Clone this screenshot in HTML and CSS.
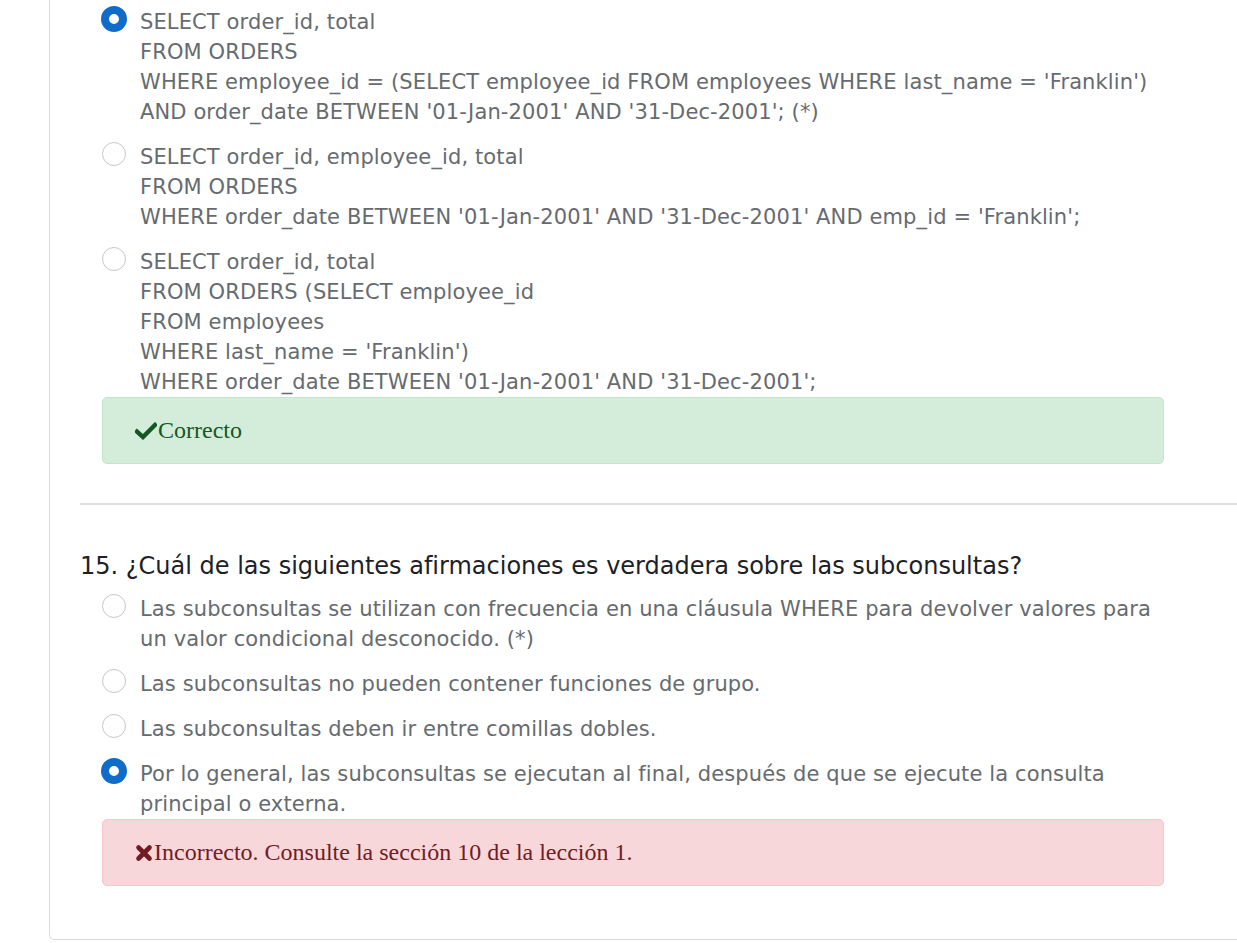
FILE: index.html
```html
<!DOCTYPE html>
<html lang="es">
<head>
<meta charset="utf-8">
<title>Quiz</title>
<link rel="stylesheet" href="styles.css">
</head>
<body>
<div class="panel">
  <div class="question first">
    <div class="options">
      <div class="option">
        <span class="radio checked"></span>
        <div class="text">SELECT order_id, total<br>FROM ORDERS<br>WHERE employee_id = (SELECT employee_id FROM employees WHERE last_name = 'Franklin')<br>AND order_date BETWEEN '01-Jan-2001' AND '31-Dec-2001'; (*)</div>
      </div>
      <div class="option">
        <span class="radio"></span>
        <div class="text">SELECT order_id, employee_id, total<br>FROM ORDERS<br>WHERE order_date BETWEEN '01-Jan-2001' AND '31-Dec-2001' AND emp_id = 'Franklin';</div>
      </div>
      <div class="option">
        <span class="radio"></span>
        <div class="text">SELECT order_id, total<br>FROM ORDERS (SELECT employee_id<br>FROM employees<br>WHERE last_name = 'Franklin')<br>WHERE order_date BETWEEN '01-Jan-2001' AND '31-Dec-2001';</div>
      </div>
      <div class="feedback ok">
        <svg class="ico" width="22" height="18" viewBox="0 0 22 18"><path d="M2 9.5 L8 15 L20 3" fill="none" stroke="#155724" stroke-width="4.4" stroke-linecap="square" stroke-linejoin="miter"/></svg>Correcto
      </div>
    </div>
  </div>

  <div class="question">
    <h2 class="qtitle">15. ¿Cuál de las siguientes afirmaciones es verdadera sobre las subconsultas?</h2>
    <div class="options">
      <div class="option">
        <span class="radio"></span>
        <div class="text">Las subconsultas se utilizan con frecuencia en una cláusula WHERE para devolver valores para<br>un valor condicional desconocido. (*)</div>
      </div>
      <div class="option">
        <span class="radio"></span>
        <div class="text">Las subconsultas no pueden contener funciones de grupo.</div>
      </div>
      <div class="option">
        <span class="radio"></span>
        <div class="text">Las subconsultas deben ir entre comillas dobles.</div>
      </div>
      <div class="option">
        <span class="radio checked"></span>
        <div class="text">Por lo general, las subconsultas se ejecutan al final, después de que se ejecute la consulta<br>principal o externa.</div>
      </div>
      <div class="feedback bad">
        <svg class="ico" width="18" height="18" viewBox="0 0 18 18"><path d="M3.5 3.5 L14.5 14.5 M14.5 3.5 L3.5 14.5" fill="none" stroke="#721c24" stroke-width="4.6" stroke-linecap="round"/></svg>Incorrecto. Consulte la sección 10 de la lección 1.
      </div>
    </div>
  </div>
</div>
</body>
</html>
```

FILE: styles.css
```css
html, body {
  margin: 0;
  padding: 0;
  background: #ffffff;
  overflow: hidden;
}
body {
  font-family: "DejaVu Sans", Verdana, sans-serif;
  width: 1237px;
  height: 943px;
}
.panel {
  margin-left: 49px;
  width: 1400px;
  border-left: 1px solid #dcdcdc;
  border-bottom: 1px solid #dcdcdc;
  border-bottom-left-radius: 5px;
  padding: 7px 0 53px 30px;
  box-sizing: border-box;
}
.question {
  width: 1400px;
}
.question.first {
  border-bottom: 2px solid #dfe0e4;
  padding-bottom: 39px;
}
.qtitle {
  margin: 46px 0 13px 0;
  font-size: 24px;
  line-height: 30px;
  font-weight: normal;
  color: #1d2125;
}
.options {
  padding-left: 22px;
}
.option {
  display: flex;
  align-items: flex-start;
  margin-top: 15px;
}
.option:first-child {
  margin-top: 0;
}
.text {
  font-size: 21px;
  line-height: 30px;
  letter-spacing: 0.12px;
  color: #666b70;
  margin-left: 14px;
}
.radio {
  flex: none;
  box-sizing: border-box;
  width: 24px;
  height: 24px;
  border-radius: 50%;
  border: 1px solid #c7c7c7;
  background: #fff;
}
.radio.checked {
  width: 26px;
  height: 26px;
  margin: -1px -1px 0 -1px;
  border: 8px solid #0f6cc9;
}
.feedback {
  box-sizing: border-box;
  width: 1062px;
  height: 67px;
  border-radius: 5px;
  display: flex;
  align-items: center;
  padding-left: 32px;
  font-family: "Liberation Serif", "Times New Roman", serif;
  font-size: 24px;
}
.feedback .ico {
  flex: none;
  margin-right: 1px;
}
.feedback.ok {
  background: #d4edda;
  border: 1px solid #c3e6cb;
  color: #155724;
}
.feedback.bad {
  background: #f8d7da;
  border: 1px solid #f5c6cb;
  color: #721c24;
}
```
